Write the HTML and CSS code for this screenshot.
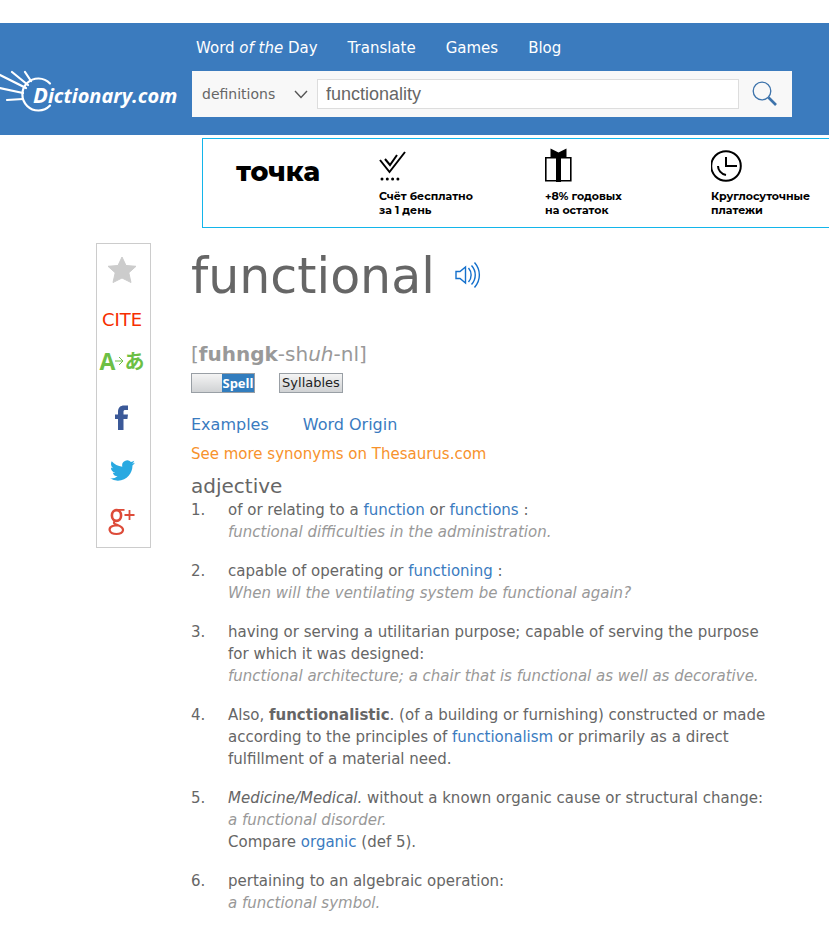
FILE: index.html
```
<!DOCTYPE html>
<html lang="en">
<head>
    <meta charset="UTF-8">
    <meta name="viewport" content="width=device-width, initial-scale=1.0">
    <title>Functional | Define Functional at Dictionary.com</title>
    <link rel="stylesheet" href="styles.css">
</head>
<body>
    <header class="header">
        <a class="logo" href="#" aria-label="Dictionary.com">
            <svg class="logo-mark" viewBox="0 0 54 42" width="54" height="42" fill="none" stroke="#fff" stroke-width="2.2" stroke-linecap="round">
                <path d="M50 13.500A16 16 0 1 0 50 35.500"/>
                <path d="M0 5L26 18M12 2L28 15M25 2L31 11M0 18L23 23M7 30L23 29"/>
            </svg>
            <span class="logo-text"><span class="logo-initial">D</span>ictionary.com</span>
        </a>
        <div class="header-main">
            <nav class="nav">
                <a href="#">Word <em>of the</em> Day</a>
                <a href="#">Translate</a>
                <a href="#">Games</a>
                <a href="#">Blog</a>
            </nav>
            <form class="search">
                <label class="search-type">
                    <select aria-label="Search in">
                        <option>definitions</option>
                        <option>synonyms</option>
                    </select>
                    <svg viewBox="0 0 14 9" width="14" height="9" fill="none" stroke="#555" stroke-width="1.4"><path d="M1 1L7 7.500L13 1"/></svg>
                </label>
                <input type="text" aria-label="Search" value="functionality">
                <button type="submit" aria-label="Search">
                    <svg viewBox="0 0 26 26" width="26" height="26" fill="none" stroke="#3d73ab">
                        <circle cx="10" cy="10" r="8.800" stroke-width="1.3"/>
                        <path d="M16.500 16.500L24 24" stroke-width="2.600"/>
                    </svg>
                </button>
            </form>
        </div>
    </header>

    <a class="banner" href="#" lang="ru">
        <span class="banner-brand">точка</span>
        <span class="banner-item">
            <svg viewBox="0 0 32 36" width="32" height="36" fill="none" stroke="#000" stroke-width="2">
                <path d="M1 12L10.500 24L26 4M6 11L11 17L18 7"/>
                <path d="M3 31h18" stroke-width="3" stroke-linecap="round" stroke-dasharray="0 5.300"/>
            </svg>
            <span>Счёт бесплатно<br>за 1 день</span>
        </span>
        <span class="banner-item">
            <svg viewBox="0 0 32 36" width="32" height="36">
                <path d="M0.800 9.800h25v23h-25z" fill="none" stroke="#000" stroke-width="1.600"/>
                <path d="M11 9h5v25h-5zM5.500 0.500l8 4 8-4v9h-16z"/>
            </svg>
            <span>+8% годовых<br>на остаток</span>
        </span>
        <span class="banner-item">
            <svg viewBox="0 0 32 36" width="32" height="36" fill="none" stroke="#000" stroke-width="2">
                <circle cx="15" cy="18" r="14.800"/>
                <path d="M15 9v9h11M7 18c0 4 3 8 8 9"/>
            </svg>
            <span>Круглосуточные<br>платежи</span>
        </span>
    </a>

    <div class="page">
        <aside class="tools">
            <button type="button" aria-label="Favorite">
                <svg viewBox="0 0 30 28" width="30" height="28" fill="#ccc" stroke="#ccc" stroke-linejoin="round"><path d="M15 1L19 9.500L29 10.300L21.800 16.800L24 26.500L15 22L6 26.500L8.200 16.800L1 10.300L11 9.500z"/></svg>
            </button>
            <a class="cite" href="#">CITE</a>
            <a class="translate" href="#" aria-label="Translate">
                <span>A</span>
                <svg viewBox="0 0 9 10" width="9" height="10" fill="none" stroke="#6cbf45"><path d="M0 5h8M4 1l4 4-4 4"/></svg>
                <span class="kana">あ</span>
            </a>
            <a class="share" href="#" aria-label="Facebook">
                <svg viewBox="0 0 14 26" width="14" height="26" fill="#3b5998"><path d="M3 25V14H0V9.500H3V7C3 2.500 5.500 0.500 9 0.500H13V5H10.500C9 5 8.500 5.600 8.500 7V9.500H13L12.400 14H8.500V25z"/></svg>
            </a>
            <a class="share" href="#" aria-label="Twitter">
                <svg viewBox="0 0 24 24" width="25" height="25" fill="#29a9e1"><path d="M23.950 4.570a10 10 0 0 1-2.820.770 4.960 4.960 0 0 0 2.160-2.720c-.950.560-2 .960-3.130 1.180a4.920 4.920 0 0 0-8.380 4.480C7.690 8.100 4.070 6.130 1.640 3.160a4.820 4.820 0 0 0-.670 2.480c0 1.710.870 3.210 2.190 4.100a4.900 4.900 0 0 1-2.230-.620v.060a4.920 4.920 0 0 0 3.950 4.830 5 5 0 0 1-2.210.080 4.940 4.940 0 0 0 4.600 3.420A9.870 9.870 0 0 1 0 19.540a13.990 13.990 0 0 0 7.560 2.210c9.050 0 14-7.500 14-13.980 0-.210 0-.420-.020-.630a9.940 9.940 0 0 0 2.410-2.570z"/></svg>
            </a>
            <a class="share" href="#" aria-label="Google Plus">
                <svg viewBox="0 0 28 28" width="28" height="28" fill="none" stroke="#dd4b39">
                    <ellipse cx="8.500" cy="7.500" rx="4.600" ry="5.400" stroke-width="2.600"/>
                    <path d="M9 1.900H16.500" stroke-width="1.800"/>
                    <path d="M7 13C4.500 15.500 7 16 10 17.200C18 20.200 15.500 26 8.500 26C0.500 26 -0.500 19.500 5.500 17.800C7 17.400 8.500 17.300 10 17.200" stroke-width="2.200"/>
                    <path d="M21.500 2v10M16.500 7h10" stroke-width="1.800"/>
                </svg>
            </a>
        </aside>

        <main class="entry">
            <div class="headword">
                <h1>functional</h1>
                <button type="button" aria-label="Listen">
                    <svg viewBox="0 0 26 28" width="26" height="28" fill="none" stroke="#1470cc" stroke-width="1.400">
                        <path d="M1 10.500H5L10.500 6V22L5 17.500H1z"/>
                        <path d="M13.500 7C17 11 17 17 13.500 21M16.500 4.500C21.500 10 21.500 18 16.500 23.500M19.500 1.500C26 9 26 19 19.500 26.500"/>
                    </svg>
                </button>
            </div>

            <p class="pronunciation">[<b>fuhngk</b>-sh<i>uh</i>-nl]</p>
            <div class="switches">
                <button type="button" class="switch switch-on"><span>Spell</span></button>
                <button type="button" class="switch">Syllables</button>
            </div>

            <nav class="jump">
                <a href="#">Examples</a>
                <a href="#">Word Origin</a>
            </nav>
            <a class="thesaurus" href="#">See more synonyms on Thesaurus.com</a>

            <h2>adjective</h2>
            <ol class="definitions">
                <li>
                    <div>of or relating to a <a href="#">function</a> or <a href="#">functions</a> :</div>
                    <div class="example">functional difficulties in the administration.</div>
                </li>
                <li>
                    <div>capable of operating or <a href="#">functioning</a> :</div>
                    <div class="example">When will the ventilating system be functional again?</div>
                </li>
                <li>
                    <div>having or serving a utilitarian purpose; capable of serving the purpose for which it was designed:</div>
                    <div class="example">functional architecture; a chair that is functional as well as decorative.</div>
                </li>
                <li>
                    <div>Also, <b>functionalistic</b>. (of a building or furnishing) constructed or made according to the principles of <a href="#">functionalism</a> or primarily as a direct fulfillment of a material need.</div>
                </li>
                <li>
                    <div><i>Medicine/Medical.</i> without a known organic cause or structural change:</div>
                    <div class="example">a functional disorder.</div>
                    <div>Compare <a href="#">organic</a> (def 5).</div>
                </li>
                <li>
                    <div>pertaining to an algebraic operation:</div>
                    <div class="example">a functional symbol.</div>
                </li>
            </ol>
        </main>
    </div>
</body>
</html>
```
FILE: styles.css
```
* {
    box-sizing: border-box;
}

body {
    margin: 0;
    padding-top: 23px;
    background: #fff;
    color: #666;
    font-family: Verdana, "DejaVu Sans", sans-serif;
    font-size: 15px;
    line-height: 22px;
}

a {
    color: #3a7bbf;
    text-decoration: none;
}

button {
    padding: 0;
    border: 0;
    background: none;
    font-family: inherit;
    cursor: pointer;
}

svg {
    display: block;
    flex: none;
}

.header {
    display: flex;
    height: 112px;
    background: #3b7bbe;
}

.logo {
    display: flex;
    flex: none;
    align-items: flex-start;
    width: 192px;
    padding-top: 47px;
    color: #fff;
}

.logo-text {
    margin: 9px 0 0 -21px;
    font: italic 700 20px/30px "Open Sans", sans-serif;
}

.logo-initial {
    font-size: 22px;
}

.header-main {
    flex: 1;
    max-width: 600px;
    margin-right: 37px;
}

.nav {
    display: flex;
    gap: 30px;
    height: 48px;
    padding: 14px 4px 0;
    white-space: nowrap;
}

.nav a {
    color: #fff;
}

.search {
    display: flex;
    align-items: center;
    height: 46px;
    background: #f8f8f8;
}

.search-type {
    display: flex;
    align-items: center;
    width: 125px;
    padding-left: 10px;
}

.search-type select {
    width: 92px;
    padding: 0;
    border: 0;
    appearance: none;
    background: none;
    color: #666;
    font: inherit;
    font-size: 14px;
}

.search input {
    flex: 1;
    min-width: 0;
    height: 30px;
    padding: 0 8px;
    border: 1px solid #ddd;
    background: #fff;
    color: #666;
    font: 18px "Liberation Sans", Arial, sans-serif;
}

.search button {
    padding: 0 14px 0 13px;
}

.banner {
    display: flex;
    height: 90px;
    margin: 3px 0 0 202px;
    padding-left: 33px;
    border: 1px solid #13b5ea;
    border-right: 0;
    color: #000;
    font: 700 11px/14px Montserrat, Inter, sans-serif;
    white-space: nowrap;
    overflow: hidden;
}

.banner-brand {
    flex: none;
    width: 143px;
    padding-top: 18px;
    font-size: 27px;
    font-weight: 800;
    line-height: 30px;
}

.banner-item {
    flex: none;
    width: 166px;
    padding-top: 9px;
}

.banner-item:last-child {
    width: auto;
}

.banner-item svg {
    margin-bottom: 5px;
}

.page {
    display: flex;
    align-items: flex-start;
    gap: 40px;
    padding: 15px 58px 0 96px;
}

.tools {
    display: flex;
    flex: none;
    flex-direction: column;
    align-items: center;
    width: 55px;
    padding: 12px 3px 11px 0;
    border: 1px solid #ccc;
}

.cite {
    margin-top: 25px;
    color: #f62e00;
    font-size: 18px;
}

.translate {
    display: flex;
    align-items: center;
    margin-top: 18px;
    color: #6cbf45;
    font: 700 23px/24px "Open Sans", sans-serif;
}

.kana {
    font-family: "Noto Sans CJK JP", sans-serif;
    font-size: 20px;
}

.share {
    display: flex;
    align-items: center;
    height: 28px;
    margin-top: 24px;
}

.translate + .share {
    margin-top: 31px;
}

.entry {
    flex: 1;
    max-width: 580px;
}

.headword {
    display: flex;
    align-items: center;
    gap: 20px;
    height: 64px;
}

h1 {
    margin: 4px 0 0;
    font-size: 49px;
    font-weight: normal;
    line-height: 64px;
}

.pronunciation {
    margin: 33px 0 5px;
    color: #999;
    font-size: 20px;
    line-height: 28px;
}

.switches {
    display: flex;
    gap: 24px;
}

.switch {
    width: 64px;
    height: 20px;
    border: 1px solid #999fa5;
    background: linear-gradient(#f4f4f4, #d0d2d4);
    color: #222;
    font-size: 13px;
    line-height: 18px;
}

.switch-on {
    padding-left: 30px;
    color: #fff;
    font-family: "Open Sans", sans-serif;
    font-weight: 700;
}

.switch-on span {
    display: block;
    background: #327dbe;
}

.jump {
    display: flex;
    gap: 34px;
    margin: 21px 0 7px;
    font-size: 16px;
}

.thesaurus {
    display: block;
    color: #f7922c;
}

h2 {
    margin: 9px 0 0;
    font-size: 20px;
    font-weight: normal;
    line-height: 25px;
}

.definitions {
    margin: 0;
    padding: 0;
    list-style: none;
    counter-reset: definition;
}

.definitions li {
    margin-bottom: 17px;
    padding-left: 37px;
    counter-increment: definition;
}

.definitions li::before {
    content: counter(definition) ".";
    float: left;
    margin-left: -37px;
}

.example {
    color: #999;
    font-style: italic;
}
```
